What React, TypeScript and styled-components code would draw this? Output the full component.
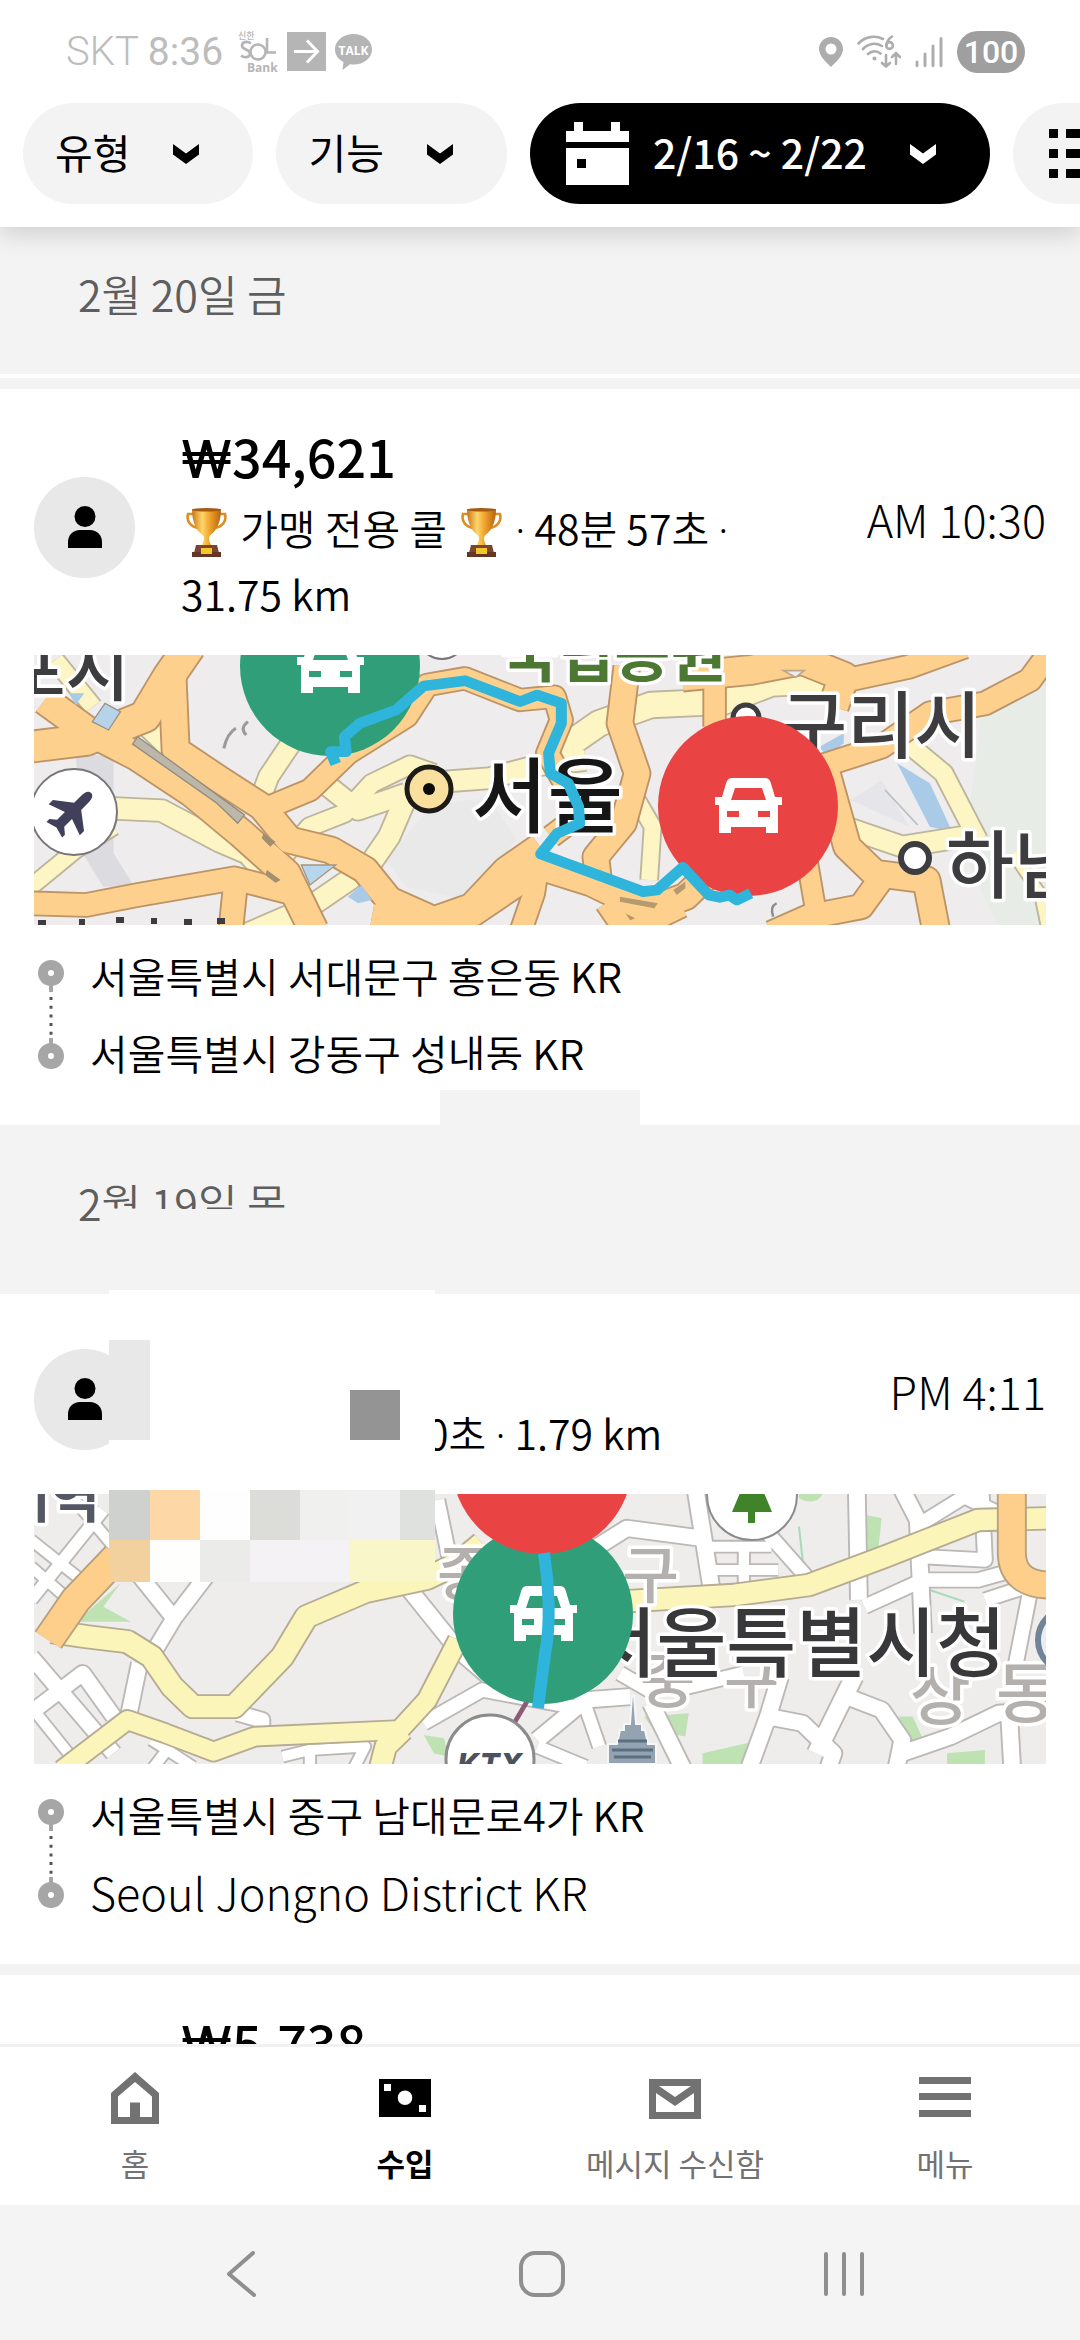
import React from "react";
import styled, { createGlobalStyle } from "styled-components";

const GlobalStyle = createGlobalStyle`
  *, *::before, *::after { box-sizing: border-box; }
  html, body { margin: 0; background: #ffffff; }
  body { font-family: "Noto Sans CJK KR", "Noto Sans", sans-serif; color: #000000; }
  button { font: inherit; color: inherit; border: 0; background: none; padding: 0; cursor: pointer; }
  svg { display: block; flex: none; }
  h2, p, ol { margin: 0; padding: 0; }
`;

const Screen = styled.div`
  display: flex;
  flex-direction: column;
  height: 100vh;
  overflow: hidden;
  background: #ffffff;
`;

/* ---------- header ---------- */

const Header = styled.header`
  position: relative;
  z-index: 2;
  flex: none;
  background: #ffffff;
  box-shadow: 0 6px 24px rgba(0, 0, 0, 0.16);
`;

const StatusBar = styled.div`
  display: flex;
  align-items: center;
  justify-content: space-between;
  height: 103px;
  padding: 0 55px 0 66px;
  font-family: Roboto, "Noto Sans CJK KR", sans-serif;
`;

const StatusGroup = styled.div<{ $gap: number }>`
  display: flex;
  align-items: center;
  gap: ${(p) => p.$gap}px;
`;

const Carrier = styled.span`
  font-size: 40px;
  line-height: 48px;
  font-weight: 300;
  color: #bdbdbd;
`;

const Clock = styled.span`
  font-size: 39px;
  line-height: 48px;
  font-weight: 400;
  color: #bdbdbd;
  margin-right: 6px;
`;

const Battery = styled.span`
  display: flex;
  align-items: center;
  justify-content: center;
  width: 68px;
  height: 42px;
  border-radius: 21px;
  background: #9f9f9f;
  color: #ffffff;
  font-size: 32px;
  font-weight: 500;
`;

const ChipRow = styled.div`
  display: flex;
  gap: 23px;
  padding: 0 0 23px 23px;
  overflow: hidden;
`;

const Chip = styled.button<{ $active?: boolean; $icon?: boolean }>`
  display: flex;
  align-items: center;
  flex: none;
  height: 101px;
  padding: 0 54px 0 ${(p) => (p.$icon ? 36 : 32)}px;
  border-radius: 51px;
  font-size: 41px;
  line-height: 60px;
  background: ${(p) => (p.$active ? "#000000" : "#f3f3f3")};
  color: ${(p) => (p.$active ? "#ffffff" : "#000000")};
  font-weight: ${(p) => (p.$active ? 500 : 400)};
  white-space: nowrap;
`;

const ChipLabel = styled.span<{ $afterIcon?: boolean }>`
  margin-left: ${(p) => (p.$afterIcon ? 24 : 0)}px;
  margin-right: 43px;
  padding-bottom: 5px;
`;

/* ---------- list ---------- */

const List = styled.main`
  flex: 1;
  min-height: 0;
  margin-top: -11px;
  overflow: hidden;
`;

const DateBar = styled.div`
  position: relative;
  display: flex;
  align-items: center;
  height: 158px;
  padding: 0 78px 4px;
  background: #f3f3f3;
`;

const DateTitle = styled.h2`
  font-size: 43px;
  line-height: 60px;
  font-weight: 350;
  color: #5e5e5e;
`;

const Divider = styled.div<{ $line?: boolean }>`
  height: ${(p) => (p.$line ? 15 : 11)}px;
  background: #f3f3f3;
  border-top: ${(p) => (p.$line ? 4 : 0)}px solid #ffffff;
`;

const Card = styled.article`
  position: relative;
  padding: 0 34px;
  background: #ffffff;
`;

const Summary = styled.div`
  display: flex;
  align-items: center;
  gap: 46px;
  padding: 31px 0 29px;
`;

const Avatar = styled.span`
  display: flex;
  flex: none;
  align-items: center;
  justify-content: center;
  width: 101px;
  height: 101px;
  margin-top: 8px;
  border-radius: 50%;
  background: #e8e8e8;
`;

const Body = styled.div`
  flex: 1;
  min-width: 0;
`;

const Price = styled.p`
  min-height: 72px;
  margin-bottom: 2px;
  font-size: 52px;
  line-height: 72px;
  font-weight: 500;
`;

const Won = styled.span`
  font-family: Inter, "Noto Sans", sans-serif;
  line-height: 1;
`;

const Details = styled.p<{ $lines: number }>`
  min-height: ${(p) => p.$lines * 66}px;
  font-size: 41px;
  line-height: 66px;
  font-weight: 350;
  svg { display: inline-block; vertical-align: -12px; margin: 0 4px 0 5px; }
`;

const Dot = styled.span`
  font-family: "Noto Sans", sans-serif;
  line-height: 1;
`;

const Covered = styled.span`
  display: inline-block;
  width: 245px;
`;

const NoWrap = styled.span`
  white-space: nowrap;
`;

const Time = styled.time`
  flex: none;
  margin-bottom: 8px;
  font-size: 45px;
  line-height: 66px;
  font-weight: 300;
`;

const MapBox = styled.div`
  height: 270px;
  overflow: hidden;
  svg { width: 100%; height: 100%; }
`;

const Stops = styled.div`
  display: flex;
  gap: 22px;
  padding: 12px 0 34px;
`;

const StopList = styled.ol`
  list-style: none;
`;

const Stop = styled.li<{ $latin?: boolean }>`
  font-size: ${(p) => (p.$latin ? 45 : 41)}px;
  line-height: 77px;
  font-weight: ${(p) => (p.$latin ? 300 : 350)};
  white-space: nowrap;
`;

/* Opaque blocks that hide private details; they lie over the list. */
const Patch = styled.span<{ $x: number; $y: number; $w: number; $h: number; $c: string }>`
  position: absolute;
  left: ${(p) => p.$x}px;
  top: ${(p) => p.$y}px;
  width: ${(p) => p.$w}px;
  height: ${(p) => p.$h}px;
  background: ${(p) => p.$c};
`;

/* ---------- bottom bars ---------- */

const TabBar = styled.nav`
  position: relative;
  flex: none;
  display: grid;
  grid-template-columns: repeat(4, 1fr);
  height: 161px;
  border-top: 3px solid #f1f1f1;
  background: #ffffff;
`;

const Tab = styled.button<{ $active?: boolean }>`
  display: flex;
  flex-direction: column;
  align-items: center;
  gap: 16px;
  && { padding: 24px 0 0; }
  font-size: 31px;
  line-height: 44px;
  color: ${(p) => (p.$active ? "#000000" : "#727272")};
  font-weight: ${(p) => (p.$active ? 700 : 400)};
`;

const SystemBar = styled.div`
  flex: none;
  display: grid;
  grid-template-columns: repeat(3, 1fr);
  height: 135px;
  padding: 2px 85px 0 90px;
  background: #f4f4f4;
`;

const SystemButton = styled.button`
  display: flex;
  align-items: center;
  justify-content: center;
`;

/* ---------- icons ---------- */

const Chevron = () => (
  <svg width="26" height="20" viewBox="0 0 26 20" fill="currentColor" aria-hidden>
    <path d="M0 0L13 9.500L26 0V10.500L13 20L0 10.500Z" />
  </svg>
);

const CalendarIcon = () => (
  <svg width="63" height="63" viewBox="0 0 63 63" aria-hidden>
    <path
      fill="currentColor"
      fillRule="evenodd"
      d="M8 0H17V9H45V0H54V9H63V20H0V9H8ZM0 26H63V63H0ZM11 37V46H20V37Z"
    />
  </svg>
);

const ListIcon = () => (
  <svg width="63" height="49" viewBox="0 0 63 49" fill="currentColor" aria-hidden>
    <path d="M0 0H9V9H0ZM0 20H9V29H0ZM0 40H9V49H0ZM17 0H63V9H17ZM17 20H63V29H17ZM17 40H63V49H17Z" />
  </svg>
);

const SolIcon = () => (
  <svg width="40" height="44" viewBox="0 0 40 44" aria-label="신한 SOL Bank">
    <g fill="none" stroke="#b5b5b5" strokeWidth="2.600">
      <path d="M13 13.500C9 10.500 3.500 12 4 16C4.500 20 12 19 12 23.500C12 28 6 28 3 25.500" />
      <circle cx="20" cy="22" r="7.500" />
      <path d="M29 8V22.500H38" />
    </g>
    <text x="0" y="9" fontSize="9" fontWeight="500" fill="#b5b5b5" fontFamily="Noto Sans CJK KR">신한</text>
    <text x="9" y="42" fontSize="12" fontWeight="700" fill="#b5b5b5" fontFamily="Open Sans">Bank</text>
  </svg>
);

const ArrowSquare = () => (
  <svg width="39" height="39" viewBox="0 0 39 39" aria-hidden>
    <rect width="39" height="39" fill="#b5b5b5" />
    <path d="M7 19.500H30M20 8.500L30.500 19.500L20 30.500" fill="none" stroke="#fff" strokeWidth="3" />
  </svg>
);

const TalkIcon = () => (
  <svg width="37" height="36" viewBox="0 0 37 36" aria-label="TALK">
    <path
      d="M18.500 0C28.700 0 37 6.700 37 15.500S28.700 30.500 18.500 30.500C17.500 30.500 16.200 30.400 15 30.200L7.500 36L8.500 28C3.500 25.500 0 21 0 15.500C0 6.700 8.300 0 18.500 0Z"
      fill="#b5b5b5"
    />
    <text x="18.500" y="20.500" fontSize="12" fontWeight="700" fill="#fff" textAnchor="middle" fontFamily="Open Sans">TALK</text>
  </svg>
);

const PinIcon = () => (
  <svg width="24" height="30" viewBox="0 0 24 30" aria-hidden>
    <path fillRule="evenodd" fill="#adadad" d="M12 0C18.600 0 24 5.200 24 12C24 19 17 25 12 30C7 25 0 19 0 12C0 5.200 5.400 0 12 0ZM12 6.500A5.500 5.500 0 1 0 12 17.500A5.500 5.500 0 1 0 12 6.500Z" />
  </svg>
);

const WifiIcon = () => (
  <svg width="44" height="33" viewBox="0 0 44 33" aria-hidden>
    <g fill="none" stroke="#adadad" strokeWidth="2.600" strokeLinecap="round">
      <path d="M1.500 8.500C8 1.500 18 0 26 4M6 14C11.500 8 19 7.500 25 11M11 19C15 15.500 20 15.500 23.500 18.500" />
      <path d="M29 20V31M25 28L29 31.500L33 28M39 29V18.500M35 22L39 18L43 22" />
      <path d="M35 1.500C31.500 4 29.500 7 29.500 10.500" />
      <circle cx="32.500" cy="10.500" r="3.400" />
    </g>
    <circle cx="17.500" cy="23.500" r="2" fill="#adadad" />
  </svg>
);

const SignalIcon = () => (
  <svg width="28" height="30" viewBox="0 0 28 30" aria-hidden>
    <path d="M2 25V28.500M10 17V28.500M18 9V28.500M26 1.500V28.500" stroke="#adadad" strokeWidth="3" strokeLinecap="round" />
  </svg>
);

const PersonIcon = () => (
  <svg width="34" height="42" viewBox="0 0 34 42" aria-hidden>
    <circle cx="17" cy="10.500" r="10.500" />
    <path d="M0 42V36C0 29 5 24 12 24H22C29 24 34 29 34 36V42Z" />
  </svg>
);

const Trophy = ({ id }: { id: string }) => (
  <svg width="41" height="49" viewBox="0 0 41 49" role="img" aria-label="트로피">
    <defs>
      <linearGradient id={id} x1="0" x2="1">
        <stop offset="0" stopColor="#c87716" />
        <stop offset=".35" stopColor="#ffd66b" />
        <stop offset=".6" stopColor="#f0a52e" />
        <stop offset="1" stopColor="#b8640f" />
      </linearGradient>
    </defs>
    <path d="M8 6H2C0 13 5 19 12 20M33 6H39C41 13 36 19 29 20" fill="none" stroke="#d98f22" strokeWidth="2.600" />
    <path d="M6 1H35C35 14 31 22 24.500 27C22.500 29 22.500 32 25 37H16C18.500 32 18.500 29 16.500 27C10 22 6 14 6 1Z" fill={`url(#${id})`} />
    <ellipse cx="20.500" cy="1.800" rx="14.500" ry="1.800" fill="#a55a10" />
    <path d="M10 37H31L33 45H8Z" fill="#7b4532" />
    <rect x="6" y="44" width="29" height="5" fill="#653526" />
    <rect x="15" y="40" width="11" height="6" fill="#f2c829" />
  </svg>
);

const StopMarkers = () => (
  <svg width="34" height="154" viewBox="0 0 34 154" aria-hidden>
    <path d="M17 36V55M17 101V119" stroke="#a6a6a6" strokeWidth="4" />
    <path d="M17 60V100" stroke="#555555" strokeWidth="3" strokeDasharray="3 5.700" />
    <circle cx="17" cy="36" r="13" fill="#a6a6a6" />
    <circle cx="17" cy="119" r="13" fill="#a6a6a6" />
    <circle cx="17" cy="36" r="3" fill="#fff" />
    <circle cx="17" cy="119" r="3" fill="#fff" />
  </svg>
);

const HomeIcon = () => (
  <svg width="52" height="54" viewBox="0 0 52 54" fill="currentColor" fillRule="evenodd" aria-hidden>
    <path d="M26 1L50 22V53H2V22ZM26 11L9 25.500V46H21V31.500H31V46H43V25.500Z" />
  </svg>
);

const MoneyIcon = () => (
  <svg width="52" height="54" viewBox="0 0 52 54" fill="currentColor" fillRule="evenodd" aria-hidden>
    <path d="M0 8H52V46H0ZM5 13V20H12V13ZM40 34V41H47V34ZM26 19.500A7.200 7.200 0 1 0 26 34A7.200 7.200 0 1 0 26 19.500Z" />
  </svg>
);

const MailIcon = () => (
  <svg width="52" height="54" viewBox="0 0 52 54" fill="currentColor" fillRule="evenodd" aria-hidden>
    <path d="M0 8H52V48H0ZM10 15L26 26L42 15ZM7 22V41H45V22L26 35Z" />
  </svg>
);

const MenuIcon = () => (
  <svg width="52" height="54" viewBox="0 0 52 54" fill="currentColor" aria-hidden>
    <path d="M0 6H52V13H0ZM0 22H52V29H0ZM0 39H52V46H0Z" />
  </svg>
);

/* ---------- maps ---------- */

const Car = ({ x, y, back }: { x: number; y: number; back: string }) => (
  <g transform={`translate(${x - 33} ${y - 28})`}>
    <path
      fill="#ffffff"
      d="M17 0H50Q54 0 55.500 4L60 19H67V27H63V55H51V49H16V55H4V27H0V19H7L11.500 4Q13 0 17 0Z"
    />
    <path fill={back} d="M20 10H47L51 22H16ZM12 33H24V39H12ZM43 33H55V39H43Z" />
  </g>
);

const Pin = ({ x, y, color }: { x: number; y: number; color: string }) => (
  <g>
    <circle cx={x} cy={y} r="90" fill={color} />
    <Car x={x} y={y} back={color} />
  </g>
);

const GREEN = "#309f79";
const RED = "#ea4343";
const ROUTE = "#2fb4dc";

type Road = { d: string; w: number; c: string };

const Roads = ({ roads, edge }: { roads: Road[]; edge: string }) => (
  <g fill="none" strokeLinejoin="round" strokeLinecap="butt">
    {roads.map((r, i) => (
      <path key={`e${i}`} d={r.d} stroke={edge} strokeWidth={r.w + 11} />
    ))}
    {roads.map((r, i) => (
      <path key={`f${i}`} d={r.d} stroke={r.c} strokeWidth={r.w} />
    ))}
  </g>
);

const Label = styled.text<{ $tone?: string; $weight?: number }>`
  font-family: "Noto Sans CJK KR", sans-serif;
  font-weight: ${(p) => p.$weight ?? 700};
  fill: ${(p) => p.$tone ?? "#3d3d40"};
  stroke: #ffffff;
  stroke-width: 7px;
  stroke-linejoin: round;
  paint-order: stroke;
`;

const O = "#fdd18d";
const Y = "#fdf6c4";

const eastYellow: Road[] = [
  { c: Y, w: 62, d: "M330 505L470 512L640 605L720 640L790 720" },
  { c: Y, w: 46, d: "M90 740L220 630L330 560" },
  { c: Y, w: 60, d: "M1290 425L1420 415L1568 375L1700 360" },
  { c: Y, w: 52, d: "M1260 400L1190 375L1080 430L1000 520L900 560L830 640" },
  { c: Y, w: 58, d: "M930 420L1040 510L1180 460" },
  { c: Y, w: 60, d: "M1180 470L1130 590L1070 680L900 800L720 880" },
  { c: Y, w: 56, d: "M755 480L780 410L845 310" },
  { c: Y, w: 50, d: "M160 60L270 200" },
  { c: Y, w: 60, d: "M400 230L500 330" },
  { c: Y, w: 74, d: "M1628 330L1740 250L1890 195L2100 185L2240 130L2440 120" },
  { c: Y, w: 46, d: "M1850 480L1895 560L1885 720" },
  { c: Y, w: 60, d: "M2450 560L2620 620L2800 590" },
  { c: Y, w: 52, d: "M2600 280L2740 400L2840 600" },
  { c: Y, w: 30, d: "M2940 640L3020 760L3040 860" },
];

const eastOrange: Road[] = [
  { c: O, w: 90, d: "M90 320L250 300L420 230L490 110L550 20" },
  { c: O, w: 82, d: "M130 180L250 270L400 350L560 460L700 580L830 700L910 870" },
  { c: O, w: 76, d: "M500 90L510 330L640 420L760 500L840 600L960 630L1060 690L1130 780L1260 840L1370 800L1470 690L1568 620" },
  { c: O, w: 62, d: "M760 510L900 450L1010 340L1180 230L1240 135L1350 115L1510 180L1610 170L1630 240L1590 340L1640 430L1690 520L1600 590" },
  { c: O, w: 66, d: "M90 790L250 795L400 765L680 715L850 760" },
  { c: O, w: 66, d: "M685 720L670 870" },
  { c: O, w: 76, d: "M1080 830L1300 870L1500 730L1568 680L1720 730L1880 810L1990 770L2060 700" },
  { c: O, w: 60, d: "M1568 640L1550 760L1510 880" },
  { c: O, w: 72, d: "M1820 80L1800 250L1850 400L1810 550L1730 650L1740 740" },
  { c: O, w: 60, d: "M1760 790L1820 880L1980 800" },
  { c: O, w: 60, d: "M2075 60L2075 260" },
  { c: O, w: 84, d: "M1980 110L2180 90L2330 60L2450 110L2420 200" },
  { c: O, w: 66, d: "M2460 120L2640 80L2800 20" },
  { c: O, w: 66, d: "M2380 380L2560 320L2700 220L2860 190L2990 120L3040 50" },
  { c: O, w: 76, d: "M2400 400L2460 620L2540 700L2690 720L2720 880" },
  { c: O, w: 70, d: "M2570 700L2500 800L2350 830L2240 880" },
  { c: O, w: 56, d: "M2340 640L2370 820" },
];

const ZOOM = 1 / 2.9037;

const EastMap = () => (
  <svg viewBox="0 0 1012 270" preserveAspectRatio="xMidYMid slice" role="img" aria-label="서울 운행 경로 지도">
    <rect width="1012" height="270" fill="#eeecec" />
    <g transform={`translate(-34 -15) scale(${ZOOM} .3333)`}>
      <path d="M2850 220L3040 120V860H2900L2800 640Z" fill="#e7ece6" />
      <path d="M1250 500L1420 470L1500 600L1350 780L1180 740L1120 660Z" fill="#e9e9e9" />
      <path d="M220 340L330 350L330 640L390 740L300 740L240 640Z" fill="#dcdbdf" />
      <path d="M2470 480L2640 560L2560 420Z" fill="#e6e6ea" />
      <path d="M2570 450L2665 555" stroke="#b9bec8" strokeWidth="5" />
      <path d="M2605 370L2700 430L2765 575L2700 560L2660 480Z" fill="#a9cbe8" />
      <path d="M2380 320L2450 280V310L2400 350Z" fill="#a9cbe8" />
    </g>
    <g transform={`translate(-34 -15) scale(${ZOOM} .3333)`}>
      <Roads roads={eastYellow} edge="#bdb59d" />
      <Roads roads={eastOrange} edge="#bd9468" />
      <path d="M400 290L710 525L690 550L630 490L385 312Z" fill="#bcb7a8" stroke="#928c80" strokeWidth="4" />
      <path d="M765 580L800 605L785 620L760 595ZM775 690L815 720L800 728L770 705Z" fill="#a08f70" />
      <path d="M305 190L350 215L315 270L268 245Z" fill="#b7d3ea" stroke="#9a938a" strokeWidth="4" />
      <path d="M200 160L245 160L220 195Z" fill="#a9cbe8" />
      <path d="M875 675L975 675L900 735Z" fill="#b7d6ee" stroke="#a7957a" strokeWidth="4" />
      <path d="M1010 770L1050 735L1080 780L1040 790Z" fill="#a9cbe8" />
      <path d="M650 325Q660 280 685 265M720 245Q695 265 715 285" fill="none" stroke="#9b9b9b" strokeWidth="9" />
      <path d="M2245 830Q2235 800 2255 790" fill="none" stroke="#8b8b8b" strokeWidth="7" />
      <path d="M1800 770L1910 790L1900 805L1800 785ZM1955 750L1990 725V745L1965 765Z" fill="#b49a6e" />
      <path d="M2275 92H2335L2310 112Z" fill="#eeecec" stroke="#b9a88c" strokeWidth="5" />
    </g>
    <circle cx="40" cy="157" r="43" fill="#fff" stroke="#77757a" strokeWidth="2" />
    <path
      transform="translate(38 157) rotate(45)"
      fill="#40405a"
      d="M0-27C4-27 5-22 5-18V-8L22 5V11L5 5V16L11 21V25L0 22L-11 25V21L-5 16V5L-22 11V5L-5-8V-18C-5-22-4-27 0-27Z"
    />
    <circle cx="408" cy="-20" r="24" fill="#fff" stroke="#77757a" strokeWidth="2" />
    <circle cx="712" cy="63" r="13" fill="#fff" stroke="#3d3d40" strokeWidth="5" />
    <circle cx="881" cy="203" r="14" fill="#fff" stroke="#3d3d40" strokeWidth="6" />
    <circle cx="395" cy="134" r="22" fill="#fae09f" stroke="#1d1b18" strokeWidth="5" />
    <circle cx="395" cy="134" r="6" fill="#0c0b0a" />
    <Label x="96" y="41" fontSize="70" textAnchor="end" $weight={500}>김포시</Label>
    <Label x="468" y="22" fontSize="61" $tone="#4c7834">국립공원</Label>
    <Label x="746" y="97" fontSize="73" $weight={500}>구리시</Label>
    <Label x="912" y="237" fontSize="74" $weight={500}>하남시</Label>
    <Label x="438" y="171" fontSize="82" $tone="#161616" $weight={500}>서울</Label>
    <path d="M4 268H12M45 267H51M82 265H90M117 266H123M150 267H158M183 266H191" stroke="#3d3d40" strokeWidth="6" />
    <Pin x={296} y={11} color={GREEN} />
    <Pin x={714} y={151} color={RED} />
    <g transform={`translate(-34 -15) scale(${ZOOM} .3333)`}>
      <path
        d="M975 372L960 335L1005 335L1000 290L1045 250L1150 210L1230 138L1350 122L1510 185L1560 165L1630 190L1630 250L1593 340L1598 400L1650 430L1680 500L1683 550L1618 580L1570 642L1868 755L1908 750L1983 682L2058 765L2090 772L2118 765L2140 780L2180 760"
        fill="none"
        stroke={ROUTE}
        strokeWidth="32"
        strokeLinejoin="round"
        strokeLinecap="butt"
      />
    </g>
  </svg>
);

const W = "#ffffff";

const streets: Road[] = [
  { c: W, w: 34, d: "M90 960L300 690" },
  { c: W, w: 30, d: "M90 780L260 920" },
  { c: W, w: 30, d: "M90 860L200 960M200 640L330 800" },
  { c: W, w: 44, d: "M90 1130L330 1420" },
  { c: W, w: 44, d: "M100 1290L240 1180L330 1310" },
  { c: W, w: 30, d: "M90 1280L230 1460M440 1380L560 1460M500 1390L440 1470" },
  { c: W, w: 44, d: "M400 880L505 1015L620 860M505 1015L450 1110" },
  { c: W, w: 44, d: "M405 1150L375 1300" },
  { c: W, w: 44, d: "M690 1300L760 1320L760 1360" },
  { c: W, w: 46, d: "M1190 930L1330 1110L1420 1190" },
  { c: W, w: 40, d: "M1270 660L1330 960M1230 1330L1400 1230L1660 1280" },
  { c: W, w: 46, d: "M1560 1380L1700 1260L1830 1250" },
  { c: W, w: 36, d: "M1560 1400L1700 1460M1700 1280L1740 1400" },
  { c: W, w: 46, d: "M2020 630L2045 790L2065 920" },
  { c: W, w: 46, d: "M1720 810L1820 745L2040 775" },
  { c: W, w: 30, d: "M2060 800H2240M2060 870H2260M2160 800V920" },
  { c: W, w: 40, d: "M2230 760L2350 900" },
  { c: W, w: 46, d: "M2488 630L2494 960" },
  { c: W, w: 46, d: "M2620 630L2665 720L2680 1060" },
  { c: W, w: 40, d: "M2660 740L2800 650L2900 700M2850 620L2860 840L2680 830" },
  { c: W, w: 40, d: "M2510 980L2680 900L2840 900L2980 860" },
  { c: W, w: 40, d: "M2860 960L3040 900M2990 940L2950 1150" },
  { c: W, w: 46, d: "M1890 1270L1990 1480" },
  { c: W, w: 46, d: "M2265 1190L2230 1310L2170 1480M2230 1310L2330 1330L2420 1420L2400 1480" },
  { c: W, w: 50, d: "M2480 1190L2370 1420" },
  { c: W, w: 46, d: "M2460 1250L2560 1290L2620 1380L2600 1480" },
  { c: W, w: 46, d: "M2620 1420L2760 1370L2900 1300L3040 1290M2930 1300L2940 1480" },
  { c: W, w: 40, d: "M1800 1180L1900 1240M1960 1230L2160 1180" },
  { c: W, w: 30, d: "M820 1430L900 1410L1060 1400L1020 1480M900 1410V1470" },
];

const centralRoads: Road[] = [
  { c: "#fbf5ba", w: 64, d: "M150 1055L250 1070L370 1085L440 1130L500 1220L560 1280L680 1280L820 1130L890 1010L1060 935L1240 895L1330 850L1400 790" },
  { c: "#fbf5ba", w: 54, d: "M180 1470L370 1320L480 1360L620 1415L740 1370L1160 1350L1240 1260L1330 1080" },
  { c: "#fbf5ba", w: 60, d: "M1170 1350L1120 1400L1100 1480" },
  { c: "#fbf5ba", w: 62, d: "M1800 965L2130 945L2350 915L2570 830L2840 720L3040 715" },
];

const centralOrange: Road[] = [
  { c: "#fdcf8b", w: 84, d: "M340 830L220 960L140 1080" },
  { c: "#fdcf8b", w: 76, d: "M2938 620V820Q2940 910 3040 915" },
];

const CentralMap = () => (
  <svg viewBox="0 0 1012 270" preserveAspectRatio="xMidYMid slice" role="img" aria-label="서울특별시청 주변 운행 경로 지도">
    <rect width="1012" height="270" fill="#efedec" />
    <g transform={`translate(-34 -214) scale(${ZOOM} .3333)`}>
      <path d="M350 910L300 980L380 1025L220 1025Z" fill="#bfe2b3" />
      <path d="M1230 1365L1290 1375L1300 1430L1260 1420Z" fill="#bfe2b3" />
      <path d="M2515 705L2560 715L2550 810L2520 820ZM1870 1310L2000 1300L1990 1370L1940 1360L1960 1440ZM2040 1420L2190 1385L2150 1460H2040ZM2610 1310L2650 1310L2690 1400L2640 1400ZM2750 1420L2860 1410V1460H2750Z" fill="#bfe2b3" />
      <path d="M2320 740L2335 880M2700 930L2800 965" stroke="#a5dcb5" strokeWidth="6" fill="none" />
      <path d="M2320 640H2390Q2370 680 2320 655Z" fill="#bfe2b3" />
      <Roads roads={streets} edge="#bbb8b6" />
      <Roads roads={centralRoads} edge="#b6ab93" />
      <Roads roads={centralOrange} edge="#b9a17e" />
      <path d="M1530 1265L1490 1335" stroke="#8d5a7a" strokeWidth="14" />
    </g>
    <Label x="66" y="24" fontSize="54" textAnchor="end" $tone="#555764">서역</Label>
    <Label x="403" y="102" fontSize="60" $tone="#b4b0ad" $weight={500}>종</Label>
    <Label x="588" y="104" fontSize="62" $tone="#b4b0ad" $weight={500}>구</Label>
    <Label x="606" y="209" fontSize="60" $tone="#b4b0ad" $weight={500}>중</Label>
    <Label x="690" y="209" fontSize="60" $tone="#b4b0ad" $weight={500}>구</Label>
    <Label x="876" y="225" fontSize="66" $tone="#b4b0ad" $weight={500}>상</Label>
    <Label x="962" y="223" fontSize="66" $tone="#b4b0ad" $weight={500}>동</Label>
    <circle cx="1036" cy="146" r="32" fill="#e8eef2" stroke="#6f8499" strokeWidth="6" />
    <Label x="972" y="177" fontSize="76" textAnchor="end" $tone="#38383a" $weight={500}>서울특별시청</Label>
    <circle cx="718" cy="1" r="45" fill="#fff" stroke="#8b8b8b" strokeWidth="2" />
    <path d="M718-30L738 18H721V29H714V18H698Z" fill="#40832a" />
    <circle cx="456" cy="265" r="44" fill="#fff" stroke="#8b8b8b" strokeWidth="3" />
    <text x="456" y="281" fontSize="30" fontWeight="800" fontStyle="italic" textAnchor="middle" fill="#4b5361" fontFamily="Inter, sans-serif">KTX</text>
    <path d="M598 202H600L602 230H608V236H611L614 250H622V270H574V250H583L586 236H590V230H596Z" fill="#93a3b1" stroke="#f4f6f8" strokeWidth="2" />
    <path d="M584 247H613M578 256H619M580 263H617" stroke="#5c6f80" strokeWidth="3" />
    <Pin x={509} y={120} color={GREEN} />
    <circle cx="508" cy="-30" r="90" fill={RED} />
    <path d="M510 59C515 90 517 130 511 160L504 214" fill="none" stroke={ROUTE} strokeWidth="12" strokeLinejoin="round" />
  </svg>
);

/* ---------- data ---------- */

const mosaic: [number, number, number, number, string][] = [
  [109, -4, 326, 292, "#ffffff"],
  [109, 46, 41, 100, "#e8e8e8"],
  [350, 96, 50, 50, "#949494"],
];

const mosaicColumns: [number, number][] = [
  [109, 41],
  [150, 50],
  [200, 50],
  [250, 50],
  [300, 50],
  [350, 50],
  [400, 35],
];

const mosaicRows: { y: number; h: number; colors: string[] }[] = [
  { y: 196, h: 50, colors: ["#ced1ce", "#fdd8a6", "#fdfefd", "#dcddd8", "#f0f1ee", "#f1f1f1", "#dee1de"] },
  { y: 246, h: 42, colors: ["#f2d19f", "#fefefd", "#ebebea", "#f4f2f4", "#f4f2f4", "#f9f6ca", "#f9f6ca"] },
];

const Mosaic = () => (
  <>
    {mosaic.map(([x, y, w, h, c]) => (
      <Patch key={`${x}-${y}`} $x={x} $y={y} $w={w} $h={h} $c={c} />
    ))}
    {mosaicRows.flatMap((row) =>
      mosaicColumns.map(([x, w], i) => (
        <Patch key={`${row.y}-${x}`} $x={x} $y={row.y} $w={w} $h={row.h} $c={row.colors[i]} />
      ))
    )}
  </>
);

type TripProps = {
  price?: string;
  details?: React.ReactNode;
  lines?: number;
  time?: string;
  map?: React.ReactNode;
  stops?: { text: string; latin?: boolean }[];
  children?: React.ReactNode;
};

const Trip = ({ price, details, lines = 1, time, map, stops, children }: TripProps) => (
  <Card>
    <Summary>
      <Avatar>
        <PersonIcon />
      </Avatar>
      <Body>
        <Price>
          {price && (
            <>
              <Won>₩</Won>
              {price}
            </>
          )}
        </Price>
        <Details $lines={lines}>{details}</Details>
      </Body>
      {time && <Time>{time}</Time>}
    </Summary>
    {map && <MapBox>{map}</MapBox>}
    {stops && (
      <Stops>
        <StopMarkers />
        <StopList>
          {stops.map((s) => (
            <Stop key={s.text} $latin={s.latin}>
              {s.text}
            </Stop>
          ))}
        </StopList>
      </Stops>
    )}
    {children}
  </Card>
);

export default function App() {
  return (
    <Screen>
      <GlobalStyle />
      <Header>
        <StatusBar>
          <StatusGroup $gap={9}>
            <Carrier>SKT</Carrier>
            <Clock>8:36</Clock>
            <SolIcon />
            <ArrowSquare />
            <TalkIcon />
          </StatusGroup>
          <StatusGroup $gap={14}>
            <PinIcon />
            <WifiIcon />
            <SignalIcon />
            <Battery>100</Battery>
          </StatusGroup>
        </StatusBar>
        <ChipRow>
          <Chip>
            <ChipLabel>유형</ChipLabel>
            <Chevron />
          </Chip>
          <Chip>
            <ChipLabel>기능</ChipLabel>
            <Chevron />
          </Chip>
          <Chip $active $icon>
            <CalendarIcon />
            <ChipLabel $afterIcon>2/16 ~ 2/22</ChipLabel>
            <Chevron />
          </Chip>
          <Chip $icon aria-label="목록">
            <ListIcon />
          </Chip>
        </ChipRow>
      </Header>

      <List>
        <DateBar>
          <DateTitle>2월 20일 금</DateTitle>
        </DateBar>
        <Divider $line />
        <Trip
          price="34,621"
          lines={2}
          time="AM 10:30"
          details={
            <>
              <Trophy id="cup-a" /> 가맹 전용 콜 <Trophy id="cup-b" /> <Dot>·</Dot> 48분 57초 <Dot>·</Dot>{" "}
              <NoWrap>31.75 km</NoWrap>
            </>
          }
          map={<EastMap />}
          stops={[{ text: "서울특별시 서대문구 홍은동 KR" }, { text: "서울특별시 강동구 성내동 KR" }]}
        />
        <DateBar>
          <DateTitle>2월 19일 목</DateTitle>
          <Patch $x={440} $y={-55} $w={200} $h={20} $c="#ffffff" />
          <Patch $x={440} $y={-35} $w={200} $h={35} $c="#f3f3f3" />
          <Patch $x={102} $y={84} $w={190} $h={40} $c="#f3f3f3" />
        </DateBar>
        <Divider />
        <Trip
          lines={1}
          time="PM 4:11"
          details={
            <>
              <Covered />0초 <Dot>·</Dot> 1.79 km
            </>
          }
          map={<CentralMap />}
          stops={[{ text: "서울특별시 중구 남대문로4가 KR" }, { text: "Seoul Jongno District KR", latin: true }]}
        >
          <Mosaic />
        </Trip>
        <Divider />
        <Trip price="5,738" lines={2} />
      </List>

      <TabBar>
        <Tab>
          <HomeIcon />홈
        </Tab>
        <Tab $active>
          <MoneyIcon />
          수입
        </Tab>
        <Tab>
          <MailIcon />
          메시지 수신함
        </Tab>
        <Tab>
          <MenuIcon />
          메뉴
        </Tab>
      </TabBar>

      <SystemBar>
        <SystemButton aria-label="뒤로">
          <svg width="30" height="46" viewBox="0 0 30 46" aria-hidden>
            <path d="M27 2L3 23L28 44" fill="none" stroke="#8f8f8f" strokeWidth="4" strokeLinecap="round" strokeLinejoin="round" />
          </svg>
        </SystemButton>
        <SystemButton aria-label="홈 화면">
          <svg width="46" height="46" viewBox="0 0 46 46" aria-hidden>
            <rect x="2" y="2" width="42" height="42" rx="14" fill="none" stroke="#8f8f8f" strokeWidth="4" />
          </svg>
        </SystemButton>
        <SystemButton aria-label="최근 앱">
          <svg width="40" height="44" viewBox="0 0 40 44" aria-hidden>
            <path d="M2 2V42M20 2V42M38 2V42" stroke="#8f8f8f" strokeWidth="4" strokeLinecap="round" />
          </svg>
        </SystemButton>
      </SystemBar>
    </Screen>
  );
}
